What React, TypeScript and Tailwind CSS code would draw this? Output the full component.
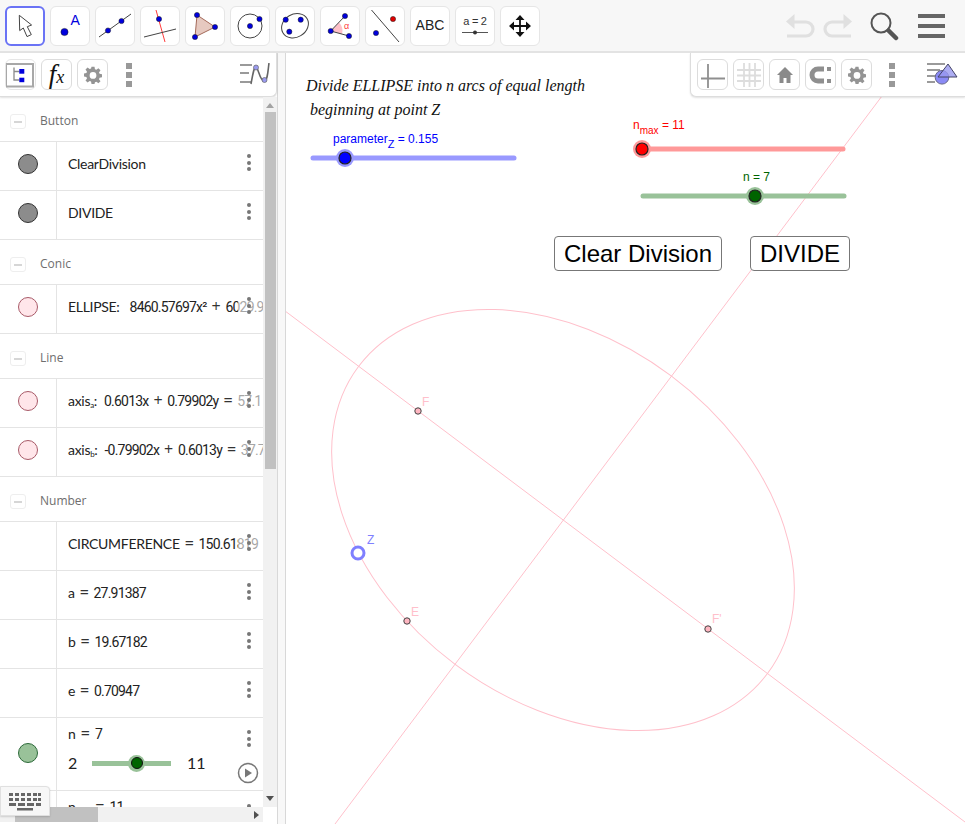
import { ReactNode } from 'react';

const BLUE = '#0000dd';

const Pt = ({ x, y, fill = BLUE, r = 2.600 }: { x: number; y: number; fill?: string; r?: number }) => (
    <circle cx={x} cy={y} r={r} fill={fill} stroke="#1a1a1a" strokeWidth="0.5" />
);

const ToolButton = ({ children, selected }: { children: ReactNode; selected?: boolean }) => (
    <div
        className={`w-10 h-10 shrink-0 rounded-md bg-white flex items-center justify-center ${
            selected ? 'border-[2.500px] border-[#6a73f5]' : 'border border-[#e6e6e6]'
        }`}
    >
        {children}
    </div>
);

const Ico = ({ children }: { children: ReactNode }) => (
    <svg className="w-10 h-10 shrink-0" viewBox="0 0 40 40" fill="none">
        {children}
    </svg>
);

const StyleButton = ({ children }: { children: ReactNode }) => (
    <div className="w-[31px] h-[31px] shrink-0 rounded-md bg-white flex items-center justify-center border border-[#dcdcdc]">
        {children}
    </div>
);

const VDots = () => (
    <div className="w-[6px] flex flex-col gap-[3px] shrink-0">
        <div className="h-[6px] bg-[#999999]" />
        <div className="h-[6px] bg-[#999999]" />
        <div className="h-[6px] bg-[#999999]" />
    </div>
);

const Gear = () => (
    <svg width="18" height="18" viewBox="0 0 24 24" fill="#949494">
        <path d="M10 1h4l.6 3.200 1.900.8L19.200 3 22 5.800l-2 2.700.8 1.900L24 11v4l-3.200.6-.8 1.900 2 2.700-2.800 2.800-2.700-2-1.900.8L14 24h-4l-.6-3.200-1.900-.8-2.700 2L2 19.200l2-2.700-.8-1.900L0 14v-4l3.200-.6.8-1.900-2-2.700L4.800 2l2.700 2 1.900-.8zM12 8a4.500 4.500 0 1 0 0 9 4.500 4.500 0 0 0 0-9z" />
    </svg>
);

const RowDots = ({ top = 'top-[12px]' }: { top?: string }) => (
    <div className={`absolute left-[247px] ${top} flex flex-col gap-[2.500px]`}>
        <div className="w-1 h-1 rounded-full bg-[#777777]" />
        <div className="w-1 h-1 rounded-full bg-[#777777]" />
        <div className="w-1 h-1 rounded-full bg-[#777777]" />
    </div>
);

const GroupHeader = ({ label }: { label: string }) => (
    <div className="h-[45px] flex items-start border-b border-[#e4e4e4] font-['Open_Sans',sans-serif]">
        <div className="ml-[10px] mt-[17px] w-[16px] h-[15px] rounded-[3px] border border-[#eeeeee] flex items-center justify-center">
            <div className="w-[8px] h-[2px] bg-[#d6d6d6]" />
        </div>
        <span className="ml-[14px] mt-[16px] text-[12px] leading-[16px] text-[#6e6e6e]">{label}</span>
    </div>
);

// numbers in the algebra rows are set narrower than the labels
const M = ({ children }: { children: ReactNode }) => (
    <span className="font-['Roboto',sans-serif] text-[14px] tracking-[-0.8px]">{children}</span>
);

const Op = ({ children }: { children: ReactNode }) => (
    <span className="mx-[5px] font-['Open_Sans',sans-serif] text-[16px] leading-[14px] text-[#333333]">{children}</span>
);

const Row = ({
    marble,
    children,
    fade,
}: {
    marble?: string;
    children: ReactNode;
    fade?: boolean;
}) => (
    <div className="relative h-[49px] flex border-b border-[#e4e4e4] overflow-hidden">
        <div className="w-[57px] shrink-0 border-r border-[#e4e4e4] flex items-center justify-center pb-[4px]">
            {marble && <div className={`w-5 h-5 rounded-full border ${marble}`} />}
        </div>
        <div className="pl-[11px] pt-[12px] text-[14px] leading-[20px] tracking-[-0.3px] text-[#222222] whitespace-nowrap">{children}</div>
        {fade && <div className="absolute left-[238px] top-0 bottom-0 w-[26px] bg-white/60" />}
        <RowDots />
    </div>
);

const Toolbar = () => (
    <div className="h-[53px] shrink-0 bg-[#f7f7f7] border-b-2 border-[#e3e3e3] flex items-center pl-[5px] pr-[20px] gap-[5px]">
        <ToolButton selected>
            <svg className="w-9 h-9" viewBox="0 0 36 36" fill="none">
                <path d="M12.300 7.300 12.700 22.600 16.300 20 20 28.600 24.300 26.600 20.300 18.700 24.600 17z" fill="#ffffff" stroke="#444444" strokeWidth="1" />
            </svg>
        </ToolButton>
        <ToolButton>
            <Ico>
                <Pt x={14.500} y={26} r={3.600} />
                <text x={20.500} y={19.300} fontSize="14" fill={BLUE} fontFamily="Liberation Sans, sans-serif">A</text>
            </Ico>
        </ToolButton>
        <ToolButton>
            <Ico>
                <path d="M4 31 36 8" stroke="#444444" />
                <Pt x={13} y={24.500} />
                <Pt x={26.500} y={15} />
            </Ico>
        </ToolButton>
        <ToolButton>
            <Ico>
                <path d="M16 4 25 36" stroke="#ff3b3b" />
                <path d="M4 31 36 23" stroke="#444444" />
                <Pt x={19} y={13} />
            </Ico>
        </ToolButton>
        <ToolButton>
            <Ico>
                <path d="M12 9 30 21 10 31z" fill="#e6c9c0" stroke="#a46a5a" />
                <Pt x={12} y={9} />
                <Pt x={30} y={21} />
                <Pt x={10} y={31} />
            </Ico>
        </ToolButton>
        <ToolButton>
            <Ico>
                <circle cx={20} cy={20} r={12} stroke="#444444" />
                <Pt x={20} y={20} />
                <Pt x={29.500} y={13} />
            </Ico>
        </ToolButton>
        <ToolButton>
            <Ico>
                <ellipse cx={20} cy={19.700} rx={14} ry={11.500} transform="rotate(-30 20 19.700)" stroke="#444444" />
                <Pt x={10.700} y={13.700} />
                <Pt x={25.700} y={13.700} />
                <Pt x={14.300} y={25.700} />
            </Ico>
        </ToolButton>
        <ToolButton>
            <Ico>
                <path d="M10.700 25 19 16.500A12 12 0 0 1 22 28z" fill="#ffc0c8" />
                <path d="M25 10 10.700 25 29 30" stroke="#444444" />
                <Pt x={10.700} y={25} />
                <Pt x={25} y={10} />
                <Pt x={29} y={30} />
                <text x={24} y={23} fontSize="9" fill="#ff3b3b" fontFamily="Liberation Sans, sans-serif">α</text>
            </Ico>
        </ToolButton>
        <ToolButton>
            <Ico>
                <path d="M6.500 4 34 36" stroke="#444444" />
                <Pt x={28} y={13} fill="#e00000" />
                <Pt x={11} y={27} />
            </Ico>
        </ToolButton>
        <ToolButton>
            <span className="font-['Liberation_Sans',sans-serif] text-[14px] text-[#222222]">ABC</span>
        </ToolButton>
        <ToolButton>
            <div className="flex flex-col items-center w-full">
                <span className="font-['Liberation_Sans',sans-serif] text-[11px] leading-[13px] tracking-[-0.3px] text-[#333333]">a = 2</span>
                <svg className="mt-[1px]" width="26" height="7" viewBox="0 0 26 7">
                    <path d="M0 3.500H26" stroke="#555555" />
                    <circle cx={13} cy={3.500} r={2} fill="#333333" />
                </svg>
            </div>
        </ToolButton>
        <ToolButton>
            <Ico>
                <path d="M20 11v18M11 20h18" stroke="#111111" strokeWidth="1.800" />
                <path d="M20 9l-4.500 5h9zM20 31l-4.500-5h9zM9 20l5-4.500v9zM31 20l-5-4.500v9z" fill="#111111" />
            </Ico>
        </ToolButton>
        <div className="ml-auto flex items-center">
            <svg width="30" height="26" viewBox="0 0 30 26" fill="none">
                <path d="M8 9h13a6.500 6.500 0 0 1 0 14H2" stroke="#e0e0e0" strokeWidth="3.200" />
                <path d="M9.500 1 1 8.500 9.500 16z" fill="#e0e0e0" />
            </svg>
            <svg className="ml-[8px]" width="30" height="26" viewBox="0 0 30 26" fill="none">
                <path d="M22 9H9a6.500 6.500 0 0 0 0 14h19" stroke="#e0e0e0" strokeWidth="3.200" />
                <path d="M20.500 1 29 8.500 20.500 16z" fill="#e0e0e0" />
            </svg>
            <svg className="ml-[16px]" width="30" height="30" viewBox="0 0 30 30" fill="none">
                <circle cx={12} cy={12} r={9.500} stroke="#555555" strokeWidth="2" />
                <path d="M19.500 19.500 27 27" stroke="#555555" strokeWidth="4.500" strokeLinecap="round" />
            </svg>
            <div className="ml-[19px] w-[27px] flex flex-col gap-[6px]">
                <div className="h-[4px] bg-[#666666]" />
                <div className="h-[4px] bg-[#666666]" />
                <div className="h-[4px] bg-[#666666]" />
            </div>
        </div>
    </div>
);

const AlgebraStyleBar = () => (
    <div className="h-[44px] shrink-0 bg-white border-b border-r border-[#dddddd] rounded-br-md shadow-[0_1px_2px_rgba(0,0,0,0.12)] flex items-center pl-[5px] gap-[5px]">
        <div className="w-[31px] h-[31px] shrink-0 rounded-md border border-[#e6e6e6] bg-white flex items-center justify-center">
            <svg width="29" height="27" viewBox="0 0 29 27" fill="none">
                <rect x="0" y="3" width="27" height="22.500" stroke="#a8a8a8" strokeWidth="2" />
                <path d="M8 6.500V19h5.500M8 10.500h5.500" stroke="#8a8a8a" strokeWidth="1.300" />
                <rect x="13.300" y="8" width="5" height="4.700" fill={BLUE} />
                <rect x="13.300" y="16.700" width="5" height="4.500" fill={BLUE} />
            </svg>
        </div>
        <StyleButton>
            <span className="font-['Liberation_Serif',serif] italic text-[27px] leading-none text-[#111111]">
                <span>f</span>
                <span className="text-[18px]">x</span>
            </span>
        </StyleButton>
        <StyleButton>
            <Gear />
        </StyleButton>
        <div className="ml-[13px]">
            <VDots />
        </div>
        <svg className="ml-auto mr-[6px]" width="32" height="24" viewBox="0 0 32 24" fill="none">
            <path d="M2 2h12M2 10h9M2 19h11" stroke="#9a9a9a" strokeWidth="2.200" />
            <path d="M13 21C15 10 16 4 18 4s4 14 8 14 4-12 5-18" stroke="#666666" strokeWidth="1.600" />
            <circle cx={18} cy={4.500} r={2.500} fill="#9a9af0" stroke="#666666" strokeWidth="0.700" />
            <circle cx={26.500} cy={17} r={2.500} fill="#9a9af0" stroke="#666666" strokeWidth="0.700" />
        </svg>
    </div>
);

const AlgebraList = () => (
    <div className="flex-1 min-h-0 overflow-hidden font-['Lato',sans-serif]">
        <GroupHeader label="Button" />
        <Row marble="bg-[#8c8c8c] border-[#333333]">ClearDivision</Row>
        <Row marble="bg-[#8c8c8c] border-[#333333]">DIVIDE</Row>
        <GroupHeader label="Conic" />
        <Row marble="bg-[#ffe6ea] border-[#a85a68]" fade>
            ELLIPSE:<span className="ml-[10px]" />
            <M>8460.57697x²</M>
            <Op>+</Op>
            <M>6029.9</M>
        </Row>
        <GroupHeader label="Line" />
        <Row marble="bg-[#ffe6ea] border-[#a85a68]" fade>
            axis<sub className="text-[8px]">a</sub>:<span className="ml-[7px]" />
            <M>0.6013x</M>
            <Op>+</Op>
            <M>0.79902y</M>
            <Op>=</Op>
            <M>57.1</M>
        </Row>
        <Row marble="bg-[#ffe6ea] border-[#a85a68]" fade>
            axis<sub className="text-[8px]">b</sub>:<span className="ml-[7px]" />
            <M>-0.79902x</M>
            <Op>+</Op>
            <M>0.6013y</M>
            <Op>=</Op>
            <M>37.7</M>
        </Row>
        <GroupHeader label="Number" />
        <Row fade>
            CIRCUMFERENCE
            <Op>=</Op>
            <M>150.61819</M>
        </Row>
        <Row>
            a<Op>=</Op>
            <M>27.91387</M>
        </Row>
        <Row>
            b<Op>=</Op>
            <M>19.67182</M>
        </Row>
        <Row>
            e<Op>=</Op>
            <M>0.70947</M>
        </Row>
        <div className="relative h-[73px] flex border-b border-[#e4e4e4]">
            <div className="w-[57px] shrink-0 border-r border-[#e4e4e4] flex items-center justify-center pb-[3px]">
                <div className="w-5 h-5 rounded-full border border-[#2d6a3a] bg-[#99c299]" />
            </div>
            <div className="pl-[11px] pt-[6px] flex-1 text-[#222222]">
                <div className="text-[14px] leading-[20px]">
                    n<Op>=</Op>
                    <M>7</M>
                </div>
                <div className="mt-[9px] flex items-center text-[16px] leading-[20px]">
                    <span className="w-[24px]">2</span>
                    <div className="relative w-[79px] h-[5px] bg-[#99c299]">
                        <div className="absolute left-[36px] top-[-6px] w-[17px] h-[17px] rounded-full bg-[#99c299] flex items-center justify-center">
                            <div className="w-[12px] h-[12px] rounded-full bg-[#006400] border border-[#111111]" />
                        </div>
                    </div>
                    <span className="ml-[16px]">11</span>
                </div>
            </div>
            <RowDots />
            <svg className="absolute left-[237px] top-[44px]" width="22" height="22" viewBox="0 0 22 22" fill="none">
                <circle cx={11} cy={11} r={9.500} stroke="#777777" strokeWidth="1.500" />
                <path d="M8 6.500v9l7-4.500z" fill="#777777" />
            </svg>
        </div>
        <div className="relative h-[49px] flex border-b border-[#e4e4e4]">
            <div className="w-[57px] shrink-0 border-r border-[#e4e4e4]" />
            <div className="pl-[11px] pt-[6px] text-[14px] leading-[20px] text-[#222222]">
                n<sub className="text-[8px]">max</sub>
                <Op>=</Op>
                <M>11</M>
            </div>
            <RowDots top="top-[13px]" />
        </div>
    </div>
);

const AlgebraPanel = () => (
    <div className="relative w-[278px] shrink-0 flex flex-col bg-white border-r border-[#d8d8d8]">
        <AlgebraStyleBar />
        <div className="flex-1 min-h-0 flex">
            <div className="flex-1 min-w-0 flex flex-col">
                <AlgebraList />
                <div className="h-[15px] shrink-0 bg-[#f1f1f1] flex items-center">
                    <div className="ml-[15px] w-[83px] h-[15px] bg-[#c1c1c1]" />
                    <div className="ml-auto mr-[4px] w-0 h-0 border-y-[4px] border-y-transparent border-l-[5px] border-l-[#505050]" />
                </div>
                <div className="h-[2px] shrink-0" />
            </div>
            <div className="w-[14px] shrink-0 bg-[#f1f1f1] flex flex-col items-center mb-[17px]">
                <div className="mt-[6px] w-0 h-0 border-x-[4px] border-x-transparent border-b-[5px] border-b-[#a3a3a3]" />
                <div className="mt-[4px] w-[11px] h-[357px] bg-[#c1c1c1]" />
                <div className="mt-auto mb-[6px] w-0 h-0 border-x-[4px] border-x-transparent border-t-[5px] border-t-[#505050]" />
            </div>
        </div>
        {/* on-screen keyboard button */}
        <div className="absolute left-0 top-[733px] w-[50px] h-[30px] bg-[#f7f7f7] border border-[#e0e0e0] rounded-tr-sm flex items-center justify-center shadow-[0_1px_2px_rgba(0,0,0,0.15)]">
            <svg width="34" height="19" viewBox="0 0 34 19" fill="#666666">
                <path d="M1 1h4v3H1zM7 1h4v3H7zM13 1h4v3h-4zM19 1h4v3h-4zM25 1h4v3h-4zM30 1h3v3h-3zM1 6h4v3H1zM7 6h4v3H7zM13 6h4v3h-4zM19 6h4v3h-4zM25 6h4v3h-4zM30 6h3v3h-3zM1 11h7v3H1zM10 11h7v3h-7zM19 11h7v3h-7zM28 11h5v3h-5zM9 16h16v2.500H9z" />
            </svg>
        </div>
    </div>
);

const Slider = ({ x1, x2, y, thumb, track, core }: { x1: number; x2: number; y: number; thumb: number; track: string; core: string }) => (
    <g>
        <line x1={x1} x2={x2} y1={y} y2={y} stroke={track} strokeWidth="5" strokeLinecap="round" />
        <circle cx={thumb} cy={y} r={9} fill={track} />
        <circle cx={thumb} cy={y} r={6} fill={core} stroke="#222222" strokeWidth="1.200" />
    </g>
);

const GeometryCanvas = () => (
    <div className="relative flex-1 min-w-0 bg-white border-l border-[#d8d8d8] ml-[7px] font-['Liberation_Sans',sans-serif]">
        <svg className="absolute left-[-1px] top-0 w-[680px] h-[771px]" viewBox="285 53 680 771" fill="none">
            <ellipse cx={563} cy={520} rx={255.700} ry={180.200} transform="rotate(36.900 563 520)" stroke="#ffc0cb" />
            <line x1={286} y1={311.700} x2={965} y2={822} stroke="#ffc0cb" />
            <line x1={882} y1={96} x2={335} y2={824} stroke="#ffc0cb" />
            <Slider x1={313} x2={514} y={158} thumb={345} track="#9999ff" core="#0000ff" />
            <Slider x1={644} x2={843} y={149} thumb={642} track="#ff9999" core="#ff0000" />
            <Slider x1={643} x2={844} y={196} thumb={755} track="#99c299" core="#006400" />
            <circle cx={418} cy={411} r={3.200} fill="#ffb6c1" stroke="#444444" />
            <circle cx={407} cy={621} r={3.200} fill="#ffb6c1" stroke="#444444" />
            <circle cx={708} cy={629} r={3.200} fill="#ffb6c1" stroke="#444444" />
            <circle cx={358} cy={553} r={6} fill="#ffffff" stroke="#7f7fff" strokeWidth="3" />
        </svg>

        <div className="absolute left-[20px] top-[24px] font-['Liberation_Serif',serif] italic text-[16px] leading-[18px] text-[#111111] whitespace-nowrap">
            Divide ELLIPSE into n arcs of equal length
        </div>
        <div className="absolute left-[24px] top-[48px] font-['Liberation_Serif',serif] italic text-[16px] leading-[18px] text-[#111111] whitespace-nowrap">
            beginning at point Z
        </div>
        <div className="absolute left-[47px] top-[79px] text-[12px] leading-[14px] text-[#0000ff] whitespace-nowrap">
            parameter<sub className="text-[11px] bottom-[-5px]">Z</sub> = 0.155
        </div>
        <div className="absolute left-[347px] top-[65px] text-[12px] leading-[14px] text-[#ff0000] whitespace-nowrap">
            n<sub className="text-[10px] bottom-[-5px]">max</sub> = 11
        </div>
        <div className="absolute left-[457px] top-[117px] text-[12px] leading-[14px] text-[#006400] whitespace-nowrap">n = 7</div>

        <div className="absolute left-[268px] top-[183px] w-[168px] h-[35px] bg-white border-[1.500px] border-[#777777] rounded-[4px] flex items-center justify-center text-[24px] text-black">
            Clear Division
        </div>
        <div className="absolute left-[464px] top-[183px] w-[100px] h-[35px] bg-white border-[1.500px] border-[#777777] rounded-[4px] flex items-center justify-center text-[24px] text-black">
            DIVIDE
        </div>

        <span className="absolute left-[136px] top-[342px] text-[12px] leading-[14px] text-[#ffc0cb]">F</span>
        <span className="absolute left-[81px] top-[480px] text-[12px] leading-[14px] text-[#8080ff]">Z</span>
        <span className="absolute left-[125px] top-[552px] text-[12px] leading-[14px] text-[#ffc0cb]">E</span>
        <span className="absolute left-[426px] top-[559px] text-[12px] leading-[14px] text-[#ffc0cb]">F'</span>

        <div className="absolute right-0 top-0 w-[275px] h-[44px] bg-white border-l border-b border-[#dddddd] rounded-bl-md shadow-[0_1px_2px_rgba(0,0,0,0.12)] flex items-center pl-[6px] gap-[5px]">
            <StyleButton>
                <svg width="26" height="26" viewBox="0 0 26 26" fill="none" stroke="#8f8f8f" strokeWidth="1.800">
                    <path d="M8 2v24M1 16.500h24" />
                </svg>
            </StyleButton>
            <StyleButton>
                <svg width="26" height="26" viewBox="0 0 26 26" fill="none" stroke="#dddddd" strokeWidth="1.800">
                    <path d="M8 1v24M13.500 1v24M19 1v24M1 8h24M1 13.500h24M1 19h24" />
                </svg>
            </StyleButton>
            <StyleButton>
                <svg width="18" height="18" viewBox="0 0 18 18" fill="#8a8a8a">
                    <path d="M9 1 1 9h2.500v8h4v-5h3v5h4V9H17z" />
                </svg>
            </StyleButton>
            <StyleButton>
                <svg width="24" height="20" viewBox="0 0 24 20" fill="none">
                    <path d="M15 4H9a6 6 0 0 0 0 12h6" stroke="#8f8f8f" strokeWidth="5" />
                    <path d="M18 2h4v4h-4zM18 14h4v4h-4z" fill="#8f8f8f" />
                </svg>
            </StyleButton>
            <StyleButton>
                <Gear />
            </StyleButton>
            <div className="ml-[12px]">
                <VDots />
            </div>
            <svg className="ml-auto mr-[6px]" width="32" height="28" viewBox="0 0 32 28" fill="none">
                <path d="M0 3h18M0 9h13M0 15h8M0 21h8" stroke="#9a9a9a" strokeWidth="2" />
                <circle cx={15} cy={16.300} r={6.800} fill="#8a8af5" stroke="#666688" />
                <path d="M21 3 30 16H11z" fill="#9a9af0" fillOpacity="0.8" stroke="#444466" />
            </svg>
        </div>
    </div>
);

export default function App() {
    return (
        <div className="w-[965px] h-[824px] flex flex-col bg-white overflow-hidden">
            <Toolbar />
            <div className="flex-1 min-h-0 flex bg-[#f8f8f8]">
                <AlgebraPanel />
                <GeometryCanvas />
            </div>
        </div>
    );
}
